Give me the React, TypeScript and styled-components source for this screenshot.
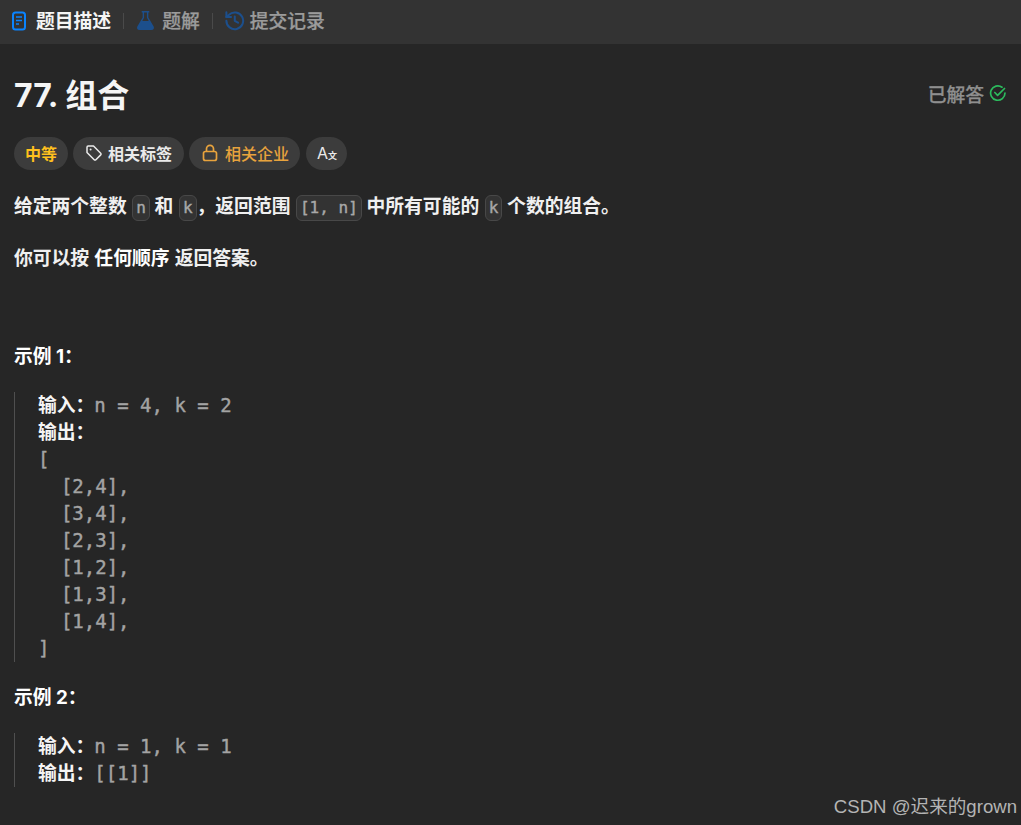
import styled, { createGlobalStyle } from 'styled-components'

const cjk = `Inter, "Noto Sans CJK SC", sans-serif`
const mono = `"DejaVu Sans Mono", "Noto Sans CJK SC", monospace`

const GlobalStyle = createGlobalStyle`
  html, body {
    margin: 0;
    height: 825px;
    overflow: hidden;
    background: #262626;
    color: #f5f5f5;
    font-family: ${cjk};
  }
`

const Page = styled.div`
  position: relative;
  height: 825px;
  overflow: hidden;
`

const TabBar = styled.div`
  height: 44px;
  box-sizing: border-box;
  padding: 0 0 0 11px;
  background: #333333;
  display: flex;
  align-items: center;
`

const Tab = styled.div<{ $active?: boolean; $gap?: number }>`
  display: flex;
  align-items: center;
  gap: ${({ $gap }) => $gap ?? 7}px;
  font-size: 18.8px;
  line-height: 24px;
  font-weight: ${({ $active }) => ($active ? 700 : 500)};
  color: ${({ $active }) => ($active ? '#f5f5f5' : '#9b9b9b')};
  -webkit-text-stroke: ${({ $active }) => ($active ? '0' : '0.25px')};
`

const TabDivider = styled.div`
  width: 1px;
  height: 16px;
  margin: -3px 12px 0;
  background: #4a4a4a;
`

const Content = styled.div`
  padding: 0 14px;
`

const TitleRow = styled.div`
  display: flex;
  align-items: center;
  justify-content: space-between;
  height: 44px;
  margin-top: 27px;
`

const Title = styled.h1`
  margin: 0;
  font-size: 32px;
  font-weight: 700;
  color: #f5f5f5;
`

const Solved = styled.div`
  display: flex;
  align-items: center;
  gap: 5px;
  font-size: 18.8px;
  font-weight: 500;
  color: #8f8f8f;
  -webkit-text-stroke: 0.25px;
`

const Chips = styled.div`
  display: flex;
  gap: 5px;
  margin-top: 22px;
`

const Chip = styled.div<{ $color?: string; $bold?: boolean; $left?: number; $right?: number; $gap?: number }>`
  height: 33px;
  box-sizing: border-box;
  padding: 0 ${({ $right }) => $right ?? 11}px 2px ${({ $left }) => $left ?? 12}px;
  border-radius: 17px;
  background: #3c3c3c;
  display: flex;
  align-items: center;
  gap: ${({ $gap }) => $gap ?? 5}px;
  font-size: 16px;
  font-weight: ${({ $bold }) => ($bold ? 600 : 500)};
  color: ${({ $color }) => $color ?? '#eaeaea'};
`

const TranslateChip = styled(Chip)`
  margin-left: 1px;
`

const Para = styled.p<{ $top: number }>`
  margin: ${({ $top }) => $top}px 0 0;
  font-size: 18.8px;
  line-height: 27px;
  font-weight: 600;
  color: #f0f0f0;
`

const Strong = styled.strong`
  margin: 0 0.5px;
  font-weight: 700;
  color: #ffffff;
`

const Heading = styled.strong`
  font-weight: 700;
  color: #ffffff;
`

const Code = styled.code`
  display: inline-block;
  margin-left: 0.8px;
  padding: 0 3px;
  font-family: ${mono};
  font-size: 16px;
  font-weight: 400;
  line-height: 24px;
  color: #a8a8a8;
  background: #333333;
  border: 1px solid #484848;
  border-radius: 6px;
  -webkit-text-stroke: 0.4px;
`

const Example = styled.pre<{ $top: number }>`
  margin: ${({ $top }) => $top}px 0 0;
  padding-left: 23px;
  border-left: 1.5px solid #4f4f4f;
  font-family: ${mono};
  font-size: 19px;
  line-height: 27px;
  color: #a3a3a3;
  -webkit-text-stroke: 0.4px;
`

const Label = styled.span`
  font-family: ${cjk};
  font-size: 18.8px;
  font-weight: 700;
  color: #f5f5f5;
  -webkit-text-stroke: 0;
`

const Watermark = styled.div`
  position: absolute;
  right: 4px;
  bottom: 7px;
  font-family: "Liberation Sans", "Noto Sans CJK SC", sans-serif;
  font-size: 18.6px;
  color: #b4b4b4;
`

const IconSlot = styled.span`
  display: flex;
  margin-top: -3px;
`

const DocIcon = () => (
  <svg width="18" height="20" viewBox="0 0 18 20" fill="none">
    <rect x="2" y="1.500" width="12" height="17" rx="2.500" stroke="#0a84ff" strokeWidth="2" />
    <path d="M5 6h6M5 9.500h6M5 13h3" stroke="#0a84ff" strokeWidth="1.600" />
  </svg>
)

const FlaskIcon = () => (
  <svg width="19" height="21" viewBox="0 0 20 22" fill="none">
    <path d="M6 1h8v1.600h-1v5.200l5.600 9.400c.9 1.600-.2 3.800-2.200 3.800H3.600c-2 0-3.100-2.200-2.200-3.800L7 7.800V2.600H6z" fill="#1c4f8c" />
    <path d="M8.500 2.600v5.600L6.600 11.500h6.800l-1.900-3.300V2.600z" fill="#333333" />
  </svg>
)

const HistoryIcon = () => (
  <svg width="20" height="20" viewBox="1.500 1.500 21.500 21.500" fill="none" stroke="#1c4f8c" strokeWidth="2.200" strokeLinecap="round" strokeLinejoin="round">
    <path d="M3 12a9 9 0 1 0 2.800-6.500L3 8" />
    <path d="M3 3v5h5" />
    <path d="M12 7.500V12l3.500 2" />
  </svg>
)

const CheckCircleIcon = () => (
  <svg width="18" height="18" viewBox="0 0 18 18" fill="none" stroke="#2cbb5d" strokeWidth="1.700" strokeLinecap="round" strokeLinejoin="round">
    <path d="M16 9a7.200 7.200 0 1 1-3-5.800" />
    <path d="M5.800 8.500l2.800 2.800L15.500 4.500" />
  </svg>
)

const TagIcon = () => (
  <svg width="18" height="18" viewBox="0 0 18 18" fill="none" stroke="#eaeaea" strokeWidth="1.500" strokeLinejoin="round">
    <path d="M2 3.200c0-.7.500-1.200 1.200-1.200h5.300l7.200 7.200c.5.500.5 1.200 0 1.700l-4.800 4.800c-.5.500-1.200.5-1.700 0L2 8.500z" />
    <circle cx="5.600" cy="5.600" r="1" fill="#eaeaea" stroke="none" />
  </svg>
)

const LockIcon = () => (
  <svg width="16" height="18" viewBox="0 0 16 18" fill="none" stroke="#e8a33d" strokeWidth="1.700">
    <rect x="1.500" y="7.500" width="13" height="9" rx="2" />
    <path d="M4.500 7.500V4.800a3.500 3.500 0 0 1 7 0v2.700" />
  </svg>
)

const TranslateMark = styled.span`
  display: inline-flex;
  align-items: baseline;
  font-size: 16px;
  font-weight: 400;
`

const TranslateSub = styled.span`
  font-size: 9px;
  font-weight: 700;
`

const exampleOne = `[
  [2,4],
  [3,4],
  [2,3],
  [1,2],
  [1,3],
  [1,4],
]`

export default function App() {
  return (
    <Page>
      <GlobalStyle />
      <TabBar>
        <Tab $active>
          <IconSlot><DocIcon /></IconSlot>
          题目描述
        </Tab>
        <TabDivider />
        <Tab>
          <IconSlot><FlaskIcon /></IconSlot>
          题解
        </Tab>
        <TabDivider />
        <Tab $gap={5}>
          <IconSlot><HistoryIcon /></IconSlot>
          提交记录
        </Tab>
      </TabBar>
      <Content>
        <TitleRow>
          <Title>77. 组合</Title>
          <Solved>
            已解答
            <CheckCircleIcon />
          </Solved>
        </TitleRow>
        <Chips>
          <Chip $color="#ffc01e" $bold $left={11}>中等</Chip>
          <Chip $bold $right={12}>
            <TagIcon />
            相关标签
          </Chip>
          <Chip $color="#e8a33d" $left={13} $gap={7}>
            <LockIcon />
            相关企业
          </Chip>
          <TranslateChip $left={11} $right={10}>
            <TranslateMark>
              A<TranslateSub>文</TranslateSub>
            </TranslateMark>
          </TranslateChip>
        </Chips>
        <Para $top={23}>
          给定两个整数 <Code>n</Code> 和 <Code>k</Code>，返回范围 <Code>[1, n]</Code> 中所有可能的 <Code>k</Code> 个数的组合。
        </Para>
        <Para $top={24}>
          你可以按 <Strong>任何顺序</Strong> 返回答案。
        </Para>
        <Para $top={71}>
          <Heading>示例 1：</Heading>
        </Para>
        <Example $top={22}>
          <Label>输入：</Label>n = 4, k = 2{'\n'}
          <Label>输出：</Label>{'\n'}
          {exampleOne}
        </Example>
        <Para $top={22}>
          <Heading>示例 2：</Heading>
        </Para>
        <Example $top={22}>
          <Label>输入：</Label>n = 1, k = 1{'\n'}
          <Label>输出：</Label>[[1]]
        </Example>
      </Content>
      <Watermark>CSDN @迟来的grown</Watermark>
    </Page>
  )
}
